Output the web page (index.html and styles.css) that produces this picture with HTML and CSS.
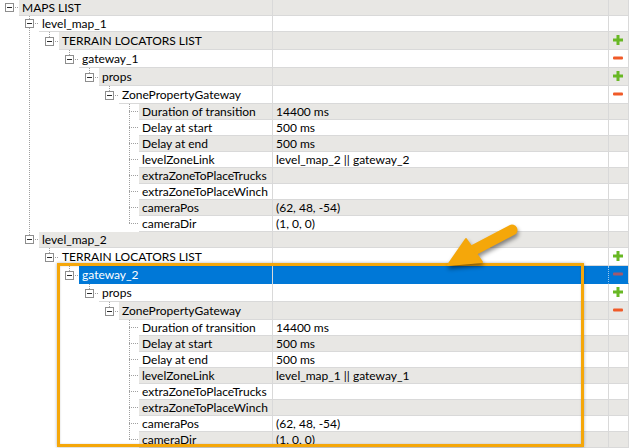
FILE: index.html
```html
<!DOCTYPE html>
<html>
<head>
<meta charset="utf-8">
<link rel="stylesheet" href="styles.css">
</head>
<body>
<div class="grid">
  <div class="row h16 alt">
    <div class="tree"><span class="n"><span class="box"></span></span><span class="lbl">MAPS LIST</span></div>
    <div class="val"></div><div class="act"></div>
  </div>
  <div class="row h16">
    <div class="tree"><span class="g"></span><span class="n thru"><span class="box"></span></span><span class="lbl">level_map_1</span></div>
    <div class="val"></div><div class="act"></div>
  </div>
  <div class="row h18 alt">
    <div class="tree"><span class="g"></span><span class="g v"></span><span class="n up"><span class="box"></span></span><span class="lbl">TERRAIN LOCATORS LIST</span></div>
    <div class="val"></div><div class="act"><svg class="ico" viewBox="0 0 10 10"><path class="plus" d="M3.5 0h3v3.5h3.5v3h-3.5v3.5h-3v-3.5h-3.5v-3h3.5z"/></svg></div>
  </div>
  <div class="row h18">
    <div class="tree"><span class="g"></span><span class="g v"></span><span class="g"></span><span class="n up"><span class="box"></span></span><span class="lbl">gateway_1</span></div>
    <div class="val"></div><div class="act"><svg class="ico" viewBox="0 0 10 10"><rect class="minus" x="0" y="3.5" width="10" height="3" rx="1"/></svg></div>
  </div>
  <div class="row h18 alt">
    <div class="tree"><span class="g"></span><span class="g v"></span><span class="g"></span><span class="g"></span><span class="n up"><span class="box"></span></span><span class="lbl">props</span></div>
    <div class="val"></div><div class="act"><svg class="ico" viewBox="0 0 10 10"><path class="plus" d="M3.5 0h3v3.5h3.5v3h-3.5v3.5h-3v-3.5h-3.5v-3h3.5z"/></svg></div>
  </div>
  <div class="row h18">
    <div class="tree"><span class="g"></span><span class="g v"></span><span class="g"></span><span class="g"></span><span class="g"></span><span class="n up"><span class="box"></span></span><span class="lbl">ZonePropertyGateway</span></div>
    <div class="val"></div><div class="act"><svg class="ico" viewBox="0 0 10 10"><rect class="minus" x="0" y="3.5" width="10" height="3" rx="1"/></svg></div>
  </div>

  <div class="row h16 alt">
    <div class="tree"><span class="g"></span><span class="g v"></span><span class="g"></span><span class="g"></span><span class="g"></span><span class="g"></span><span class="n thru"></span><span class="lbl">Duration of transition</span></div>
    <div class="val">14400 ms</div><div class="act"></div>
  </div>
  <div class="row h16">
    <div class="tree"><span class="g"></span><span class="g v"></span><span class="g"></span><span class="g"></span><span class="g"></span><span class="g"></span><span class="n thru"></span><span class="lbl">Delay at start</span></div>
    <div class="val">500 ms</div><div class="act"></div>
  </div>
  <div class="row h16 alt">
    <div class="tree"><span class="g"></span><span class="g v"></span><span class="g"></span><span class="g"></span><span class="g"></span><span class="g"></span><span class="n thru"></span><span class="lbl">Delay at end</span></div>
    <div class="val">500 ms</div><div class="act"></div>
  </div>
  <div class="row h16">
    <div class="tree"><span class="g"></span><span class="g v"></span><span class="g"></span><span class="g"></span><span class="g"></span><span class="g"></span><span class="n thru"></span><span class="lbl">levelZoneLink</span></div>
    <div class="val">level_map_2 || gateway_2</div><div class="act"></div>
  </div>
  <div class="row h16 alt">
    <div class="tree"><span class="g"></span><span class="g v"></span><span class="g"></span><span class="g"></span><span class="g"></span><span class="g"></span><span class="n thru"></span><span class="lbl">extraZoneToPlaceTrucks</span></div>
    <div class="val"></div><div class="act"></div>
  </div>
  <div class="row h16">
    <div class="tree"><span class="g"></span><span class="g v"></span><span class="g"></span><span class="g"></span><span class="g"></span><span class="g"></span><span class="n thru"></span><span class="lbl">extraZoneToPlaceWinch</span></div>
    <div class="val"></div><div class="act"></div>
  </div>
  <div class="row h16 alt">
    <div class="tree"><span class="g"></span><span class="g v"></span><span class="g"></span><span class="g"></span><span class="g"></span><span class="g"></span><span class="n thru"></span><span class="lbl">cameraPos</span></div>
    <div class="val">(62, 48, -54)</div><div class="act"></div>
  </div>
  <div class="row h16">
    <div class="tree"><span class="g"></span><span class="g v"></span><span class="g"></span><span class="g"></span><span class="g"></span><span class="g"></span><span class="n up"></span><span class="lbl">cameraDir</span></div>
    <div class="val">(1, 0, 0)</div><div class="act"></div>
  </div>

  <div class="row h16 alt">
    <div class="tree"><span class="g"></span><span class="n up"><span class="box"></span></span><span class="lbl">level_map_2</span></div>
    <div class="val"></div><div class="act"></div>
  </div>
  <div class="row h18">
    <div class="tree"><span class="g"></span><span class="g"></span><span class="n up"><span class="box"></span></span><span class="lbl">TERRAIN LOCATORS LIST</span></div>
    <div class="val"></div><div class="act"><svg class="ico" viewBox="0 0 10 10"><path class="plus" d="M3.5 0h3v3.5h3.5v3h-3.5v3.5h-3v-3.5h-3.5v-3h3.5z"/></svg></div>
  </div>
  <div class="row h18 sel">
    <div class="tree"><span class="g"></span><span class="g"></span><span class="g"></span><span class="n up"><span class="box"></span></span><span class="lbl">gateway_2</span></div>
    <div class="val"></div><div class="act"><svg class="ico" viewBox="0 0 10 10"><rect class="minus" x="0" y="3.5" width="10" height="3" rx="1"/></svg></div>
  </div>
  <div class="row h18">
    <div class="tree"><span class="g"></span><span class="g"></span><span class="g"></span><span class="g"></span><span class="n up"><span class="box"></span></span><span class="lbl">props</span></div>
    <div class="val"></div><div class="act"><svg class="ico" viewBox="0 0 10 10"><path class="plus" d="M3.5 0h3v3.5h3.5v3h-3.5v3.5h-3v-3.5h-3.5v-3h3.5z"/></svg></div>
  </div>
  <div class="row h18 alt">
    <div class="tree"><span class="g"></span><span class="g"></span><span class="g"></span><span class="g"></span><span class="g"></span><span class="n up"><span class="box"></span></span><span class="lbl">ZonePropertyGateway</span></div>
    <div class="val"></div><div class="act"><svg class="ico" viewBox="0 0 10 10"><rect class="minus" x="0" y="3.5" width="10" height="3" rx="1"/></svg></div>
  </div>

  <div class="row h16">
    <div class="tree"><span class="g"></span><span class="g"></span><span class="g"></span><span class="g"></span><span class="g"></span><span class="g"></span><span class="n thru"></span><span class="lbl">Duration of transition</span></div>
    <div class="val">14400 ms</div><div class="act"></div>
  </div>
  <div class="row h16 alt">
    <div class="tree"><span class="g"></span><span class="g"></span><span class="g"></span><span class="g"></span><span class="g"></span><span class="g"></span><span class="n thru"></span><span class="lbl">Delay at start</span></div>
    <div class="val">500 ms</div><div class="act"></div>
  </div>
  <div class="row h16">
    <div class="tree"><span class="g"></span><span class="g"></span><span class="g"></span><span class="g"></span><span class="g"></span><span class="g"></span><span class="n thru"></span><span class="lbl">Delay at end</span></div>
    <div class="val">500 ms</div><div class="act"></div>
  </div>
  <div class="row h16 alt">
    <div class="tree"><span class="g"></span><span class="g"></span><span class="g"></span><span class="g"></span><span class="g"></span><span class="g"></span><span class="n thru"></span><span class="lbl">levelZoneLink</span></div>
    <div class="val">level_map_1 || gateway_1</div><div class="act"></div>
  </div>
  <div class="row h16">
    <div class="tree"><span class="g"></span><span class="g"></span><span class="g"></span><span class="g"></span><span class="g"></span><span class="g"></span><span class="n thru"></span><span class="lbl">extraZoneToPlaceTrucks</span></div>
    <div class="val"></div><div class="act"></div>
  </div>
  <div class="row h16 alt">
    <div class="tree"><span class="g"></span><span class="g"></span><span class="g"></span><span class="g"></span><span class="g"></span><span class="g"></span><span class="n thru"></span><span class="lbl">extraZoneToPlaceWinch</span></div>
    <div class="val"></div><div class="act"></div>
  </div>
  <div class="row h16">
    <div class="tree"><span class="g"></span><span class="g"></span><span class="g"></span><span class="g"></span><span class="g"></span><span class="g"></span><span class="n thru"></span><span class="lbl">cameraPos</span></div>
    <div class="val">(62, 48, -54)</div><div class="act"></div>
  </div>
  <div class="row h16 alt">
    <div class="tree"><span class="g"></span><span class="g"></span><span class="g"></span><span class="g"></span><span class="g"></span><span class="g"></span><span class="n up"></span><span class="lbl">cameraDir</span></div>
    <div class="val">(1, 0, 0)</div><div class="act"></div>
  </div>

  <div class="highlight"></div>
  <svg class="arrow" viewBox="436 218 90 56" width="90" height="56">
    <line class="shaft" x1="512" y1="230" x2="472" y2="251"/>
    <polygon class="head" points="448,265 466,239 482,262"/>
  </svg>
</div>
</body>
</html>
```

FILE: styles.css
```css
:root {
  --vd: repeating-linear-gradient(to bottom, #a0a0a0 0 1px, transparent 1px 2px);
  --hd: repeating-linear-gradient(to right, #a0a0a0 0 1px, transparent 1px 2px);
  --line: #d9d9d9;
}

html, body {
  margin: 0;
  padding: 0;
  background: #fff;
}

body {
  font-family: "Lato", "Segoe UI", "Noto Sans", sans-serif;
  font-size: 12px;
  color: #000;
}

.grid {
  position: relative;
  width: 630px;
  height: 448px;
  overflow: hidden;
}

.row {
  display: flex;
  width: 630px;
  --bg: #fff;
}

.row.alt {
  --bg: #e8e7e4;
}

.row.sel {
  --bg: #0078d7;
  --line: #0078d7;
  color: #fff;
}

.h16 {
  height: 16px;
  --cy: 7px;
  --by: 3px;
  line-height: 15px;
}

.h18 {
  height: 18px;
  --cy: 9px;
  --by: 5px;
  line-height: 17px;
}

.tree {
  display: flex;
  flex: none;
  width: 272px;
  border-right: 1px solid var(--line-col, #d9d9d9);
}

.g {
  flex: none;
  width: 20px;
}

.g.v {
  background: var(--vd) 9px 0 / 1px 100% no-repeat;
}

.n {
  flex: none;
  width: 19px;
  display: flex;
  align-items: flex-start;
  background-image: var(--vline, none), var(--hd);
  background-repeat: no-repeat;
  background-size: var(--vsize, 0 0), 10px 1px;
  background-position: 9px 0, 9px var(--cy);
}

.n.up {
  --vline: var(--vd);
  --vsize: 1px calc(var(--cy) + 1px);
}

.n.thru {
  --vline: var(--vd);
  --vsize: 1px 100%;
}

.box {
  width: 9px;
  height: 9px;
  box-sizing: border-box;
  margin: var(--by) 0 0 5px;
  border: 1px solid #8e8e8e;
  background: linear-gradient(#2b2b2b, #2b2b2b) 1px 3px / 5px 1px no-repeat, #fff;
}

.lbl {
  flex: 1;
  min-width: 0;
  padding-left: 3px;
  background: var(--bg);
  border-bottom: 1px solid var(--line);
  white-space: nowrap;
  overflow: hidden;
}

.val {
  flex: none;
  width: 336px;
  box-sizing: border-box;
  padding-left: 3px;
  background: var(--bg);
  border-bottom: 1px solid var(--line);
  border-right: 1px solid #d9d9d9;
  white-space: nowrap;
  overflow: hidden;
}

.row.sel .val {
  border-right: 1px dotted #9cc8ee;
}

.act {
  flex: none;
  width: 19px;
  background: var(--bg);
  border-bottom: 1px solid var(--line);
  border-right: 1px solid #d9d9d9;
  display: flex;
  align-items: center;
  justify-content: center;
}

.ico {
  width: 10px;
  height: 10px;
  margin-right: 1px;
  margin-bottom: 1px;
}

.plus {
  fill: #68b824;
}

.minus {
  fill: #f05a28;
}

.row.sel .minus {
  fill: #a4596c;
}

.highlight {
  position: absolute;
  left: 57px;
  top: 263px;
  width: 527px;
  height: 184px;
  box-sizing: border-box;
  border: 3px solid #f5a70a;
  box-shadow: 0 0 3px rgba(0, 0, 0, 0.3), inset 0 0 2px rgba(0, 0, 0, 0.2);
}

.arrow {
  position: absolute;
  left: 436px;
  top: 218px;
  overflow: visible;
  filter: drop-shadow(1px 3px 2px rgba(0, 0, 0, 0.45));
}

.shaft {
  stroke: #f5a70a;
  stroke-width: 11;
  stroke-linecap: round;
}

.head {
  fill: #f5a70a;
  stroke: #f5a70a;
  stroke-width: 2;
  stroke-linejoin: round;
}
```
